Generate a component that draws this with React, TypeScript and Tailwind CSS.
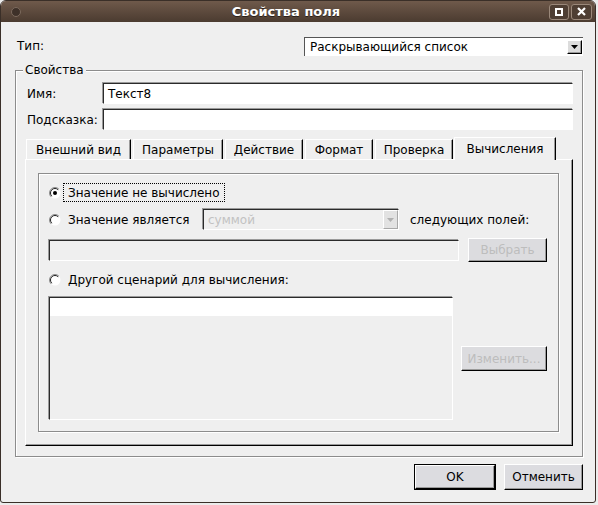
import React from "react";

// classic sunken edge used by text fields and lists
const sunken =
  "border-t border-l border-t-[#2a2a2a] border-l-[#2a2a2a] border-b border-r border-b-white border-r-white shadow-[-1px_-1px_0_#9a9a9a]";
const raised =
  "border border-t-white border-l-white border-r-black border-b-black shadow-[inset_-1px_-1px_0_#9a9a9a]";
const etched = "border border-[#8c8c8c] shadow-[inset_1px_1px_0_#fff,1px_1px_0_#fff]";

function Radio({ checked }: { checked?: boolean }) {
  return (
    <svg width="12" height="12" viewBox="0 0 12 12" className="shrink-0">
      <circle cx="6" cy="6" r="5.5" fill="#fff" />
      <path d="M9.9 2.1A5.5 5.5 0 0 0 2.1 9.9" fill="none" stroke="#8a8a8a" />
      <path d="M9.2 2.8A4.5 4.5 0 0 0 2.8 9.2" fill="none" stroke="#222" />
      {checked && <circle cx="6" cy="6" r="2" fill="#000" />}
    </svg>
  );
}

function Arrow({ color }: { color: string }) {
  return (
    <svg width="7" height="4" viewBox="0 0 7 4">
      <path d="M0 0H7L3.5 4Z" fill={color} />
    </svg>
  );
}

const tabs = [
  { label: "Внешний вид", w: "w-[105px]" },
  { label: "Параметры", w: "w-[90px]" },
  { label: "Действие", w: "w-[78px]" },
  { label: "Формат", w: "w-[68px]" },
  { label: "Проверка", w: "w-[78px]" },
];

export default function App() {
  return (
    <div className="w-[598px] h-[505px] bg-[#ececec] font-['DejaVu_Sans',sans-serif] text-[12px] leading-[14px] text-black">
      <div className="w-[596px] h-[503px] flex flex-col rounded-t-[6px] rounded-b-[3px] overflow-hidden border border-[#3a2f28] bg-[#efefef]">
        {/* title bar */}
        <div className="h-[21px] shrink-0 grid grid-cols-[1fr_auto_1fr] items-center bg-linear-to-b from-[#6f5a4b] to-[#4b3b30]">
          <div className="pl-[10px]">
            <div className="w-[10px] h-[10px] rounded-full bg-[#3e3129] border border-[#7c6a5d]" />
          </div>
          <div className="mr-[24px] text-white font-bold text-[13px] [text-shadow:0_1px_0_#2a201a]">Свойства поля</div>
          <div className="flex justify-end gap-[2px] pr-[3px]">
            <div className="w-[20px] h-[16px] rounded-[3px] border border-[#9a887a] bg-[#4e3e33] flex items-center justify-center">
              <div className="w-[8px] h-[8px] border-2 border-white" />
            </div>
            <div className="w-[21px] h-[16px] rounded-[3px] border border-[#9a887a] bg-[#4e3e33] flex items-center justify-center">
              <svg width="9" height="9" viewBox="0 0 9 9">
                <path d="M1 1L8 8M8 1L1 8" stroke="#fff" strokeWidth="2.2" />
              </svg>
            </div>
          </div>
        </div>

        {/* body */}
        <div className="flex-1 flex flex-col">
          <div className="mt-[15px] h-[19px] flex items-center pl-[16px] pr-[12px]">
            <span className="-mt-[2px]">Тип:</span>
            <div className="ml-auto w-[279px] h-[19px] flex items-center bg-white border-t border-l border-[#555]">
              <span className="pl-[5px] flex-1">Раскрывающийся список</span>
              <div className={`w-[15px] h-[14px] mr-[1px] flex items-center justify-center bg-[#dcdcdc] ${raised}`}>
                <Arrow color="#000" />
              </div>
            </div>
          </div>

          {/* Свойства group */}
          <div className={`relative mt-[14px] ml-[14px] w-[568px] h-[387px] ${etched}`}>
            <span className="absolute -top-[8px] left-[7px] px-[2px] bg-[#efefef]">Свойства</span>

            <div className="mt-[12px] flex items-center pl-[11px]">
              <span className="w-[76px]">Имя:</span>
              <div className={`w-[470px] h-[21px] bg-white flex items-center pl-[4px] ${sunken}`}>Текст8</div>
            </div>
            <div className="mt-[5px] flex items-center pl-[11px]">
              <span className="w-[76px]">Подсказка:</span>
              <div className={`w-[470px] h-[21px] bg-white ${sunken}`} />
            </div>

            {/* tabs */}
            <div className="mt-[7px] ml-[10px] h-[22px] flex items-end gap-[2px]">
              {tabs.map((t) => (
                <div
                  key={t.label}
                  className={`${t.w} h-[20px] flex items-center justify-center border-t border-l border-r border-t-white border-l-white border-r-black shadow-[inset_-1px_0_0_#9a9a9a]`}
                >
                  {t.label}
                </div>
              ))}
              <div className="relative z-10 -ml-[1px] w-[102px] h-[23px] -mb-[1px] flex items-start pt-[4px] justify-center bg-[#efefef] border-t border-l border-r border-t-white border-l-white border-r-black shadow-[inset_-1px_0_0_#9a9a9a]">
                Вычисления
              </div>
            </div>

            {/* tab panel */}
            <div className="ml-[9px] w-[548px] h-[287px] border-t border-l border-t-white border-l-white border-r border-b border-r-black border-b-black shadow-[inset_-1px_-1px_0_#9a9a9a]">
              <div className={`mt-[13px] ml-[12px] w-[521px] h-[259px] pl-[10px] ${etched}`}>
                <div className="mt-[9px] h-[19px] flex items-center">
                  <Radio checked />
                  <div className="ml-[2px] h-[19px] flex items-center px-[4px] border border-dotted border-black">
                    Значение не вычислено
                  </div>
                </div>

                <div className="mt-[7px] h-[21px] flex items-center">
                  <Radio />
                  <span className="ml-[7px] w-[135px]">Значение является</span>
                  <div className={`w-[196px] h-[21px] flex items-center bg-[#efefef] ${sunken}`}>
                    <span className="pl-[4px] flex-1 text-[#c2c2c2]">суммой</span>
                    <div className="w-[15px] h-[19px] flex items-center justify-center bg-[#e2e2e2] border border-t-white border-l-white border-r-[#a8a8a8] border-b-[#a8a8a8]">
                      <Arrow color="#b0b0b0" />
                    </div>
                  </div>
                  <span className="ml-[11px]">следующих полей:</span>
                </div>

                <div className="mt-[8px] h-[24px] flex items-center">
                  <div className={`w-[410px] h-[21px] bg-[#efefef] ${sunken}`} />
                  <div className={`ml-[9px] w-[79px] h-[24px] flex items-center justify-center bg-[#dcdcdf] text-[#bdbdbd] ${raised}`}>
                    Выбрать
                  </div>
                </div>

                <div className="mt-[10px] h-[16px] flex items-center">
                  <Radio />
                  <span className="ml-[7px]">Другой сценарий для вычисления:</span>
                </div>

                <div className="mt-[9px] h-[123px] flex items-start">
                  <div className={`w-[404px] h-[123px] bg-[#efefef] ${sunken}`}>
                    <div className="h-[18px] bg-white" />
                  </div>
                  <div className={`ml-[8px] mt-[49px] w-[86px] h-[25px] flex items-center justify-center bg-[#dcdcdf] text-[#bdbdbd] ${raised}`}>
                    Изменить...
                  </div>
                </div>
              </div>
            </div>
          </div>

          {/* dialog buttons */}
          <div className="mt-[7px] flex justify-end items-start gap-[8px] pr-[12px]">
            <div className="w-[82px] h-[26px] border border-black">
              <div className={`w-full h-full flex items-center justify-center bg-[#dcdce0] ${raised}`}>OK</div>
            </div>
            <div className={`w-[79px] h-[26px] flex items-center justify-center bg-[#dcdce0] ${raised}`}>Отменить</div>
          </div>
        </div>
      </div>
    </div>
  );
}
